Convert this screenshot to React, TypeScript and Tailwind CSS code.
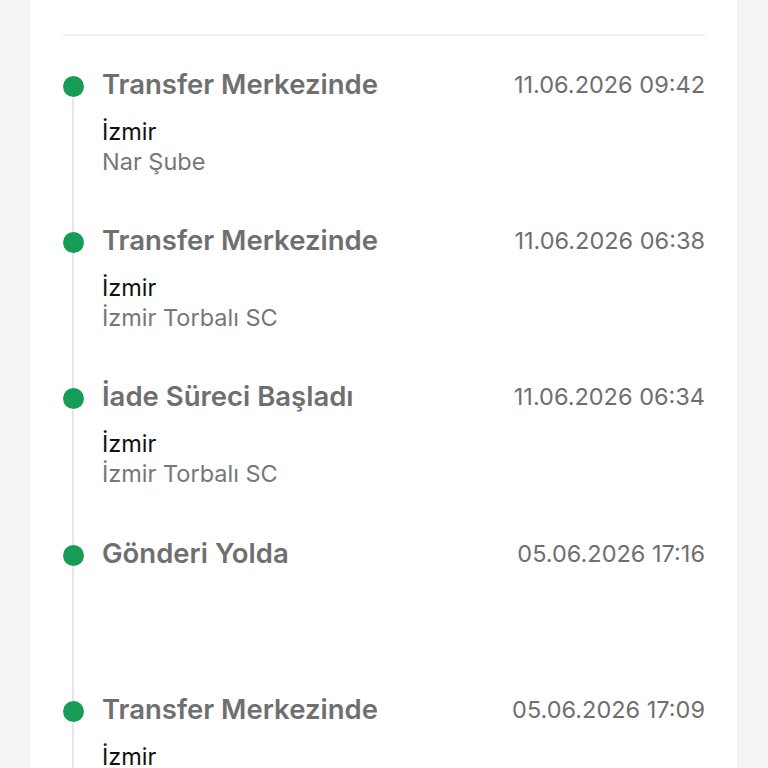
import React from "react";

type Item = { title: string; date: string; city?: string; branch?: string; h: string };

const items: Item[] = [
  { title: "Transfer Merkezinde", date: "11.06.2026 09:42", city: "İzmir", branch: "Nar Şube", h: "h-[156px]" },
  { title: "Transfer Merkezinde", date: "11.06.2026 06:38", city: "İzmir", branch: "İzmir Torbalı SC", h: "h-[156px]" },
  { title: "İade Süreci Başladı", date: "11.06.2026 06:34", city: "İzmir", branch: "İzmir Torbalı SC", h: "h-[157px]" },
  { title: "Gönderi Yolda", date: "05.06.2026 17:16", h: "h-[156px]" },
  { title: "Transfer Merkezinde", date: "05.06.2026 17:09", city: "İzmir", branch: "Nar Şube", h: "h-[156px]" },
];

export default function App() {
  return (
    <div
      className="h-[768px] w-[768px] overflow-hidden bg-[#f3f4f6]"
      style={{ fontFamily: "Inter, 'Noto Sans', sans-serif" }}
    >
      <div className="ml-[30px] h-full w-[707px] bg-white pl-[33px] pr-[32px]">
        <div className="h-[34px]" />
        <div className="h-[2px] bg-[#f1f1f1]" />
        <div className="pt-[40px]">
          {items.map((it, i) => (
            <div key={i} className={`flex ${it.h} items-stretch`}>
              <div className="flex w-[20px] flex-col items-center">
                <div className="h-[21px] w-[21px] shrink-0 rounded-full bg-[#179c56]" />
                <div className="w-[2px] flex-1 bg-[#e6e6e6]" />
              </div>
              <div className="ml-[19px] -mt-[9px] flex-1">
                <div className="flex h-[36px] items-center justify-between">
                  <span className="text-[27.5px] font-semibold text-[#6f6f6f]">{it.title}</span>
                  <span className="text-[23.5px] text-[#6f6f6f]">{it.date}</span>
                </div>
                {it.city && (
                  <div className="mt-[14px] text-[23.5px] leading-[30px] text-[#111]">{it.city}</div>
                )}
                {it.branch && (
                  <div className="text-[23.5px] leading-[30px] text-[#777]">{it.branch}</div>
                )}
              </div>
            </div>
          ))}
        </div>
      </div>
    </div>
  );
}
